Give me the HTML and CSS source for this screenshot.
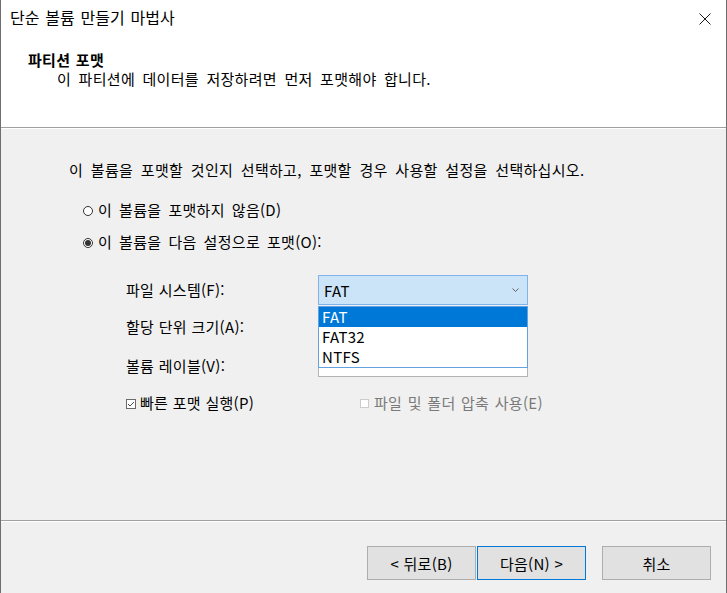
FILE: index.html
```html
<!DOCTYPE html>
<html lang="ko">
<head>
<meta charset="utf-8">
<title>단순 볼륨 만들기 마법사</title>
<link rel="stylesheet" href="styles.css">
</head>
<body>
<div class="window">
  <div class="header">
    <div class="titlebar">
      <span class="title">단순 볼륨 만들기 마법사</span>
      <svg class="close" width="12" height="12" viewBox="0 0 12 12"><path d="M0.5 0.5 L11.5 11.5 M11.5 0.5 L0.5 11.5" stroke="#1a1a1a" stroke-width="1" fill="none"/></svg>
    </div>
    <div class="heading">파티션 포맷</div>
    <div class="subheading">이 파티션에 데이터를 저장하려면 먼저 포맷해야 합니다.</div>
  </div>
  <div class="main">
    <p class="intro">이 볼륨을 포맷할 것인지 선택하고, 포맷할 경우 사용할 설정을 선택하십시오.</p>
    <div class="radio-group">
      <div class="radio"><span class="radio-mark"></span><span>이 볼륨을 포맷하지 않음(D)</span></div>
      <div class="radio checked"><span class="radio-mark"></span><span>이 볼륨을 다음 설정으로 포맷(O):</span></div>
    </div>
    <div class="options">
      <div class="row row-fs">
        <span class="label">파일 시스템(F):</span>
        <div class="field">
          <div class="combo combo-active"><span>FAT</span><svg class="arrow" width="7" height="4" viewBox="0 0 7 4"><path d="M0.5 0.5 L3.5 3.5 L6.5 0.5" stroke="#606060" stroke-width="1" fill="none"/></svg></div>
          <ul class="dropdown">
            <li class="selected">FAT</li>
            <li>FAT32</li>
            <li>NTFS</li>
          </ul>
        </div>
      </div>
      <div class="row row-alloc">
        <span class="label">할당 단위 크기(A):</span>
        <div class="field"><div class="combo"></div></div>
      </div>
      <div class="row row-vol">
        <span class="label">볼륨 레이블(V):</span>
        <div class="field"><div class="textbox"></div></div>
      </div>
      <div class="checks">
        <div class="check"><svg class="box" width="10" height="10" viewBox="0 0 10 10"><rect x="0.5" y="0.5" width="9" height="9" fill="#fff" stroke="#6a6a6a"/><path d="M2 5 L4 7 L8 3" stroke="#4a4a4a" stroke-width="1" fill="none"/></svg><span>빠른 포맷 실행(P)</span></div>
        <div class="check disabled"><span class="box-disabled"></span><span>파일 및 폴더 압축 사용(E)</span></div>
      </div>
    </div>
  </div>
  <div class="footer">
    <button class="btn">&lt; 뒤로(B)</button>
    <button class="btn btn-default">다음(N) &gt;</button>
    <button class="btn btn-cancel">취소</button>
  </div>
</div>
</body>
</html>
```

FILE: styles.css
```css
* { box-sizing: border-box; }
html, body { margin: 0; padding: 0; }
body {
  width: 727px;
  height: 593px;
  overflow: hidden;
  background: #f0f0f0;
  font-family: "Noto Sans CJK KR", sans-serif;
  font-size: 15px;
  letter-spacing: 0.3px;
  color: #000;
}
.window {
  width: 727px;
  height: 593px;
  display: flex;
  flex-direction: column;
  background: #f0f0f0;
  border-left: 1px solid #6e6e6e;
  border-right: 1px solid #6e6e6e;
}
.header {
  height: 128px;
  flex: none;
  background: #fff;
  border-bottom: 1px solid #a0a0a0;
  box-shadow: 0 1px 0 #ffffff;
}
.titlebar {
  height: 34px;
  display: flex;
  align-items: center;
  justify-content: space-between;
  padding: 0 15px 0 9px;
}
.title {
  font-size: 16px;
  letter-spacing: 0.1px;
  word-spacing: 1px;
  line-height: 20px;
  margin-top: -1px;
}
.close { display: block; margin-top: 4px; }
.heading {
  margin: 16px 0 0 27px;
  font-weight: bold;
  line-height: 19px;
  word-spacing: 1px;
}
.subheading {
  margin-left: 56px;
  line-height: 20px;
  word-spacing: 3px;
}
.main {
  flex: 1;
  padding: 32px 0 0 68px;
}
.intro {
  margin: 0;
  line-height: 20px;
  word-spacing: 3.2px;
}
.radio-group {
  margin: 20px 0 0 14px;
  display: flex;
  flex-direction: column;
  gap: 12px;
  word-spacing: 2.5px;
}
.radio {
  display: flex;
  align-items: center;
  gap: 5px;
  line-height: 20px;
}
.radio-mark {
  width: 10px;
  height: 10px;
  border: 1px solid #333;
  border-radius: 50%;
  background: #fff;
  position: relative;
  flex: none;
  margin-top: 1px;
}
.radio.checked .radio-mark::after {
  content: "";
  position: absolute;
  left: 1px;
  top: 1px;
  width: 6px;
  height: 6px;
  border-radius: 50%;
  background: #333;
}
.options {
  margin: 23px 0 0 57px;
}
.row {
  display: grid;
  grid-template-columns: 192px 210px;
  align-items: center;
}
.row-alloc { margin-top: 7px; }
.row-vol { margin-top: 12px; }
.label { line-height: 20px; }
.field { position: relative; }
.combo {
  height: 30px;
  border: 1px solid #adadad;
  background: #e1e1e1;
  display: flex;
  align-items: center;
  justify-content: space-between;
  padding: 0 8px 0 5px;
}
.combo-active {
  background: #cce4f7;
  border-color: #7eb4ea;
}
.arrow { display: block; }
.textbox {
  height: 23px;
  border: 1px solid #b4b4b4;
  background: #fff;
}
.dropdown {
  position: absolute;
  left: 0;
  top: 31px;
  width: 210px;
  margin: 0;
  padding: 0;
  list-style: none;
  background: #fff;
  border: 1px solid #64a1e0;
  z-index: 2;
}
.dropdown li {
  height: 20px;
  line-height: 20px;
  padding-left: 3px;
}
.dropdown li.selected {
  background: #0078d7;
  color: #fff;
}
.checks {
  margin-top: 16px;
  display: grid;
  grid-template-columns: 234px auto;
  line-height: 20px;
}
.check {
  display: flex;
  align-items: center;
  gap: 4px;
}
.check .box { display: block; flex: none; margin-top: 1px; }
.box-disabled {
  width: 9px;
  height: 9px;
  border: 1px solid #cccccc;
  background: #fff;
  flex: none;
  margin-top: 1px;
}
.check.disabled { color: #7a7a7a; gap: 5px; word-spacing: 1px; }
.footer {
  height: 73px;
  flex: none;
  border-top: 1px solid #a0a0a0;
  box-shadow: inset 0 1px 0 #ffffff;
  display: flex;
  align-items: flex-start;
  justify-content: flex-end;
  padding: 25px 15px 0 0;
}
.btn {
  width: 109px;
  height: 34px;
  font: inherit;
  letter-spacing: inherit;
  color: #000;
  background: #e1e1e1;
  border: 1px solid #adadad;
  padding: 0;
  margin: 0;
}
.btn-default {
  margin-left: 1px;
  border-color: #0078d7;
}
.btn-cancel { margin-left: 16px; }
```
